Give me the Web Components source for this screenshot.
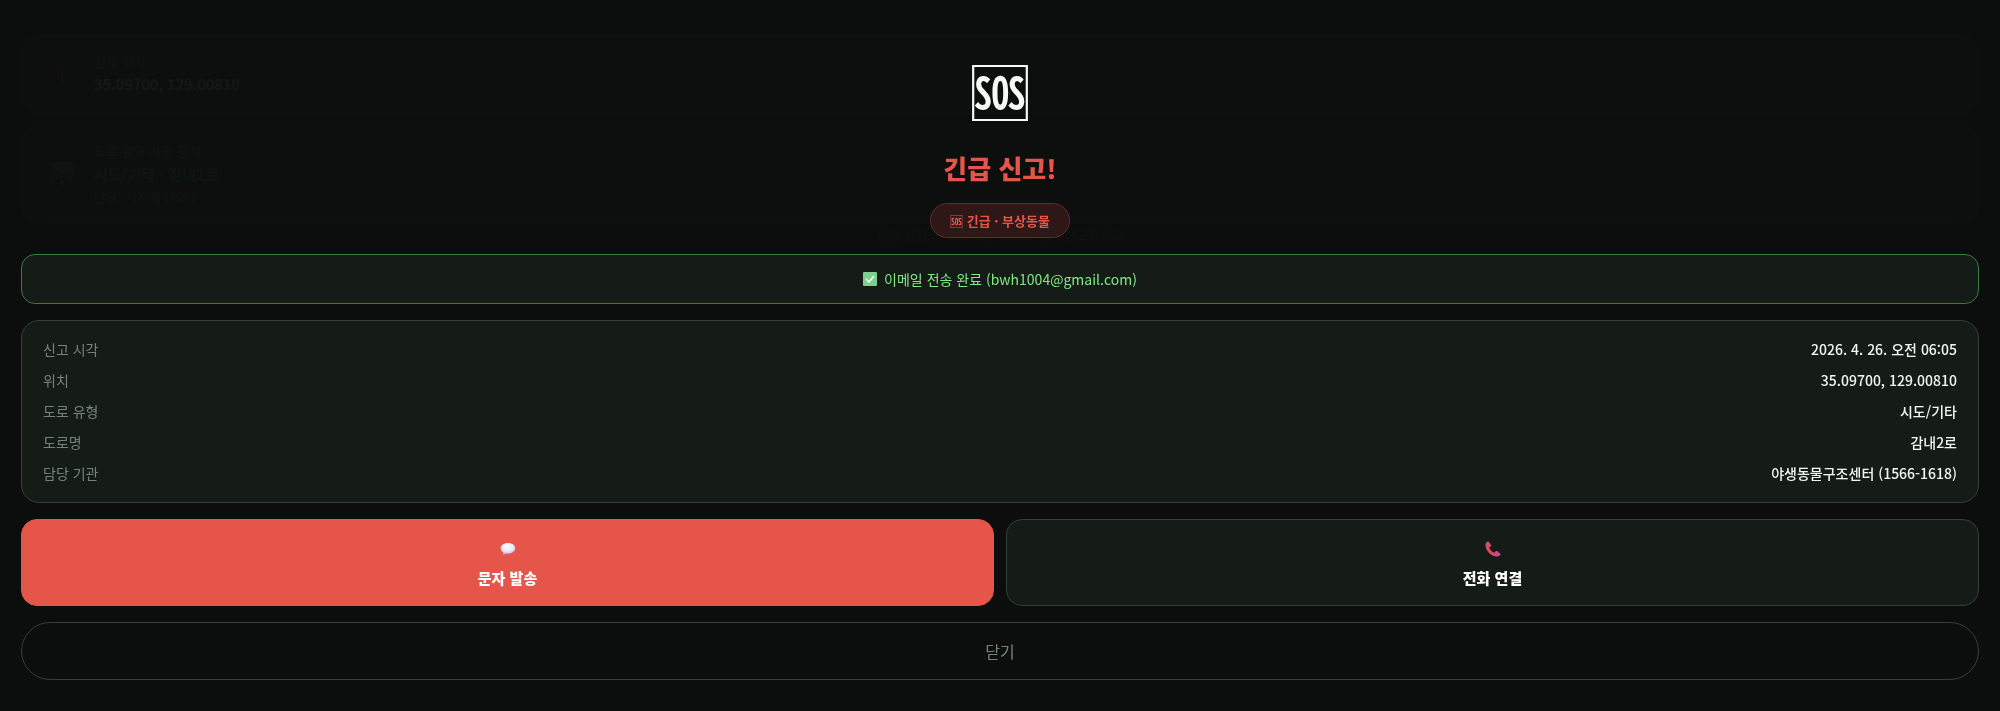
<!DOCTYPE html>
<html lang="ko">
<head>
<meta charset="utf-8">
<meta name="viewport" content="width=device-width, initial-scale=1">
<title>긴급 신고</title>
<style>
:root {
    --bg: #0a0f0e;
    --card: #151b17;
    --line: #343f39;
    --text: #f0f7f1;
    --muted: #748478;
    --red: #e5554a;
    --green: #80ea84;
}
* { box-sizing: border-box; }
body {
    margin: 0; min-height: 100vh; background: var(--bg); color: var(--text);
    font-family: "Noto Sans CJK KR", "Noto Sans", sans-serif;
    font-size: 14px; line-height: 20px;
}
</style>
</head>
<body>
<report-page>
    <status-card label="현재 위치" value="35.09700, 129.00810">
        <svg slot="icon" width="24" height="24" viewBox="0 0 24 24"><path d="M11 11h2v11l-1 2-1-2z" fill="#667"/><circle cx="12" cy="7" r="6" fill="#922"/></svg>
    </status-card>
    <status-card class="road" label="도로 유형 자동 감지" value="시도/기타 · 감내2로" note="담당: 지자체 (120)">
        <svg slot="icon" width="24" height="24" viewBox="0 0 24 24"><rect width="24" height="24" rx="2" fill="#578"/><path d="M0 8l5-3 7 7 7-5 5 4v13H0z" fill="#454"/><path d="M12 12L2 24h20z" fill="#222"/><path d="M12 14v2m0 3v4" stroke="#ddd" stroke-width="2"/></svg>
    </status-card>
    <p slot="foot">긴급 상황 시 119 또는 112에 먼저 신고하세요</p>
</report-page>

<sos-overlay>
    <sos-heading chip="긴급 · 부상동물">긴급 신고!</sos-heading>
    <mail-status>이메일 전송 완료 (bwh1004@gmail.com)</mail-status>
    <report-info></report-info>
    <action-row>
        <action-button kind="primary">
            <svg slot="icon" width="16" height="16" viewBox="0 0 16 16">
                <defs><radialGradient id="b" cx=".45" cy=".3" r=".7"><stop offset="0" stop-color="#fff"/><stop offset=".6" stop-color="#ebe6f5"/><stop offset="1" stop-color="#b9a9d8"/></radialGradient></defs>
                <path d="M8 2C3.900 2 .7 4.300 .7 7.300c0 1.900 1 3.300 2.600 4.300 0 1-.2 1.500-.8 2.100 1.300.1 2.500-.4 3.300-1.200.7.2 1.400.2 2.200.2 4.100 0 7.300-2.300 7.300-5.400S12.100 2 8 2z" fill="url(#b)"/>
            </svg>
            문자 발송
        </action-button>
        <action-button>
            <svg slot="icon" width="16" height="16" viewBox="0 0 16 16">
                <defs><linearGradient id="p" x1="0" y1="0" x2="1" y2="1"><stop offset="0" stop-color="#c04a9c"/><stop offset=".35" stop-color="#e5485a"/><stop offset=".65" stop-color="#dc4468"/><stop offset="1" stop-color="#b94bb8"/></linearGradient></defs>
                <path d="M2.700.5C1.400 1.100.5 2.200.5 4c0 5.500 5.300 11.500 11.200 11.500 1.700 0 3-.7 3.700-1.800.3-.5.200-1-.2-1.300l-3.200-2.300c-.5-.3-1-.2-1.300.2l-.8 1c-.3.300-.7.400-1.100.2C6.900 10.600 5.300 9 4.500 7.200c-.2-.4-.1-.8.200-1.100l1.100-.9c.4-.3.500-.9.200-1.300L4 .9C3.700.4 3.200.3 2.700.5z" fill="url(#p)"/>
            </svg>
            전화 연결
        </action-button>
    </action-row>
    <close-button>닫기</close-button>
</sos-overlay>

<script>
// ── Page behind the overlay ─────────────────────────────
class ReportPage extends HTMLElement {
    connectedCallback() {
        this.attachShadow({ mode: 'open' }).innerHTML = `
<style>
:host { display: flex; flex-direction: column; gap: 10px; padding: 34px 21px 0; }
::slotted(p) { margin: -8px 0 0; text-align: center; font-size: 13px; color: #46504a; }
</style>
<slot></slot>
<slot name="foot"></slot>`;
    }
}
customElements.define('report-page', ReportPage);

class StatusCard extends HTMLElement {
    connectedCallback() {
        const note = this.getAttribute('note');
        this.attachShadow({ mode: 'open' }).innerHTML = `
<style>
:host {
    display: flex; align-items: center; gap: 20px; padding: 14px 28px 18px;
    background: #3a2c2a; border: 1px solid #46463f; border-radius: 20px;
}
.label, .note { font-size: 13px; line-height: 23px; color: #6b7a6e; }
.value { font-size: 15px; line-height: 23px; font-weight: 500; color: #e8f0ea; }
:host(.road) { padding: 14px 28px; }
:host(.road) .value { font-weight: 700; color: #3fae55; }
</style>
<slot name="icon"></slot>
<div>
    <div class="label">${this.getAttribute('label')}</div>
    <div class="value">${this.getAttribute('value')}</div>
    ${note ? `<div class="note">${note}</div>` : ''}
</div>`;
    }
}
customElements.define('status-card', StatusCard);

// ── Overlay ─────────────────────────────────────────────
class SosOverlay extends HTMLElement {
    connectedCallback() {
        this.attachShadow({ mode: 'open' }).innerHTML = `
<style>
:host {
    position: fixed; inset: 0; overflow: auto; box-sizing: border-box;
    display: flex; flex-direction: column; gap: 16px;
    padding: 43px 21px 21px; background: rgba(11, 15, 14, .96);
}
</style>
<slot></slot>`;
    }
}
customElements.define('sos-overlay', SosOverlay);

class SosHeading extends HTMLElement {
    connectedCallback() {
        this.attachShadow({ mode: 'open' }).innerHTML = `
<style>
:host { display: flex; flex-direction: column; align-items: center; }
.icon { font-size: 62px; line-height: 94px; color: #f4faf5; font-weight: 500; }
h1 { margin: 12px 0 16px; font-size: 26px; line-height: 38px; font-weight: 900; color: var(--red); }
.chip {
    padding: 6px 19px; border: 1px solid #6e2723; border-radius: 20px;
    background: #2d1817; color: var(--red); font-size: 13px; line-height: 21px; font-weight: 700;
}
</style>
<div class="icon">🆘</div>
<h1><slot></slot></h1>
<div class="chip">🆘 ${this.getAttribute('chip')}</div>`;
    }
}
customElements.define('sos-heading', SosHeading);

class MailStatus extends HTMLElement {
    connectedCallback() {
        this.attachShadow({ mode: 'open' }).innerHTML = `
<style>
:host {
    display: flex; align-items: center; justify-content: center; gap: 7px;
    padding: 14px; border: 1px solid #3b7a40; border-radius: 14px;
    background: var(--card); color: var(--green);
}
</style>
<svg width="14" height="14" viewBox="0 0 14 14"><rect width="14" height="14" rx="1" fill="#7fd08f"/><path d="M3 7l3 3 5-6" fill="none" stroke="#fff" stroke-width="1.500"/></svg>
<span><slot></slot></span>`;
    }
}
customElements.define('mail-status', MailStatus);

class ReportInfo extends HTMLElement {
    connectedCallback() {
        const rows = [
            ['신고 시각', '2026. 4. 26. 오전 06:05'],
            ['위치', '35.09700, 129.00810'],
            ['도로 유형', '시도/기타'],
            ['도로명', '감내2로'],
            ['담당 기관', '야생동물구조센터 (1566-1618)'],
        ];
        this.attachShadow({ mode: 'open' }).innerHTML = `
<style>
:host {
    display: block; padding: 13px 21px; border: 1px solid var(--line);
    border-radius: 18px; background: var(--card);
}
table { width: 100%; border-collapse: collapse; }
th, td { padding: 0; line-height: 31px; }
th { text-align: left; font-weight: 400; color: var(--muted); }
td { text-align: right; font-weight: 500; }
</style>
<table>${rows.map(([k, v]) => `<tr><th scope="row">${k}</th><td>${v}</td></tr>`).join('')}</table>`;
    }
}
customElements.define('report-info', ReportInfo);

class ActionRow extends HTMLElement {
    connectedCallback() {
        this.attachShadow({ mode: 'open' }).innerHTML = `
<style>
:host { display: grid; grid-template-columns: 1fr 1fr; gap: 12px; }
</style>
<slot></slot>`;
    }
}
customElements.define('action-row', ActionRow);

class ActionButton extends HTMLElement {
    connectedCallback() {
        this.attachShadow({ mode: 'open' }).innerHTML = `
<style>
:host { display: block; }
button {
    display: flex; flex-direction: column; align-items: center; gap: 9px;
    width: 100%; padding: 21px 16px 16px; border: 1px solid var(--line); border-radius: 16px;
    background: var(--card); color: #fff; font: inherit; font-size: 15px; line-height: 23px; font-weight: 900;
    cursor: pointer;
}
:host([kind=primary]) button { background: var(--red); border-color: var(--red); }
</style>
<button type="button"><slot name="icon"></slot><span><slot></slot></span></button>`;
    }
}
customElements.define('action-button', ActionButton);

class CloseButton extends HTMLElement {
    connectedCallback() {
        this.attachShadow({ mode: 'open' }).innerHTML = `
<style>
:host { display: block; }
button {
    display: block; width: 100%; padding: 16px; border: 1px solid var(--line); border-radius: 30px;
    background: transparent; color: var(--muted); font: inherit; font-size: 16px; line-height: 24px;
    cursor: pointer;
}
</style>
<button type="button"><slot></slot></button>`;
    }
}
customElements.define('close-button', CloseButton);
</script>
</body>
</html>
